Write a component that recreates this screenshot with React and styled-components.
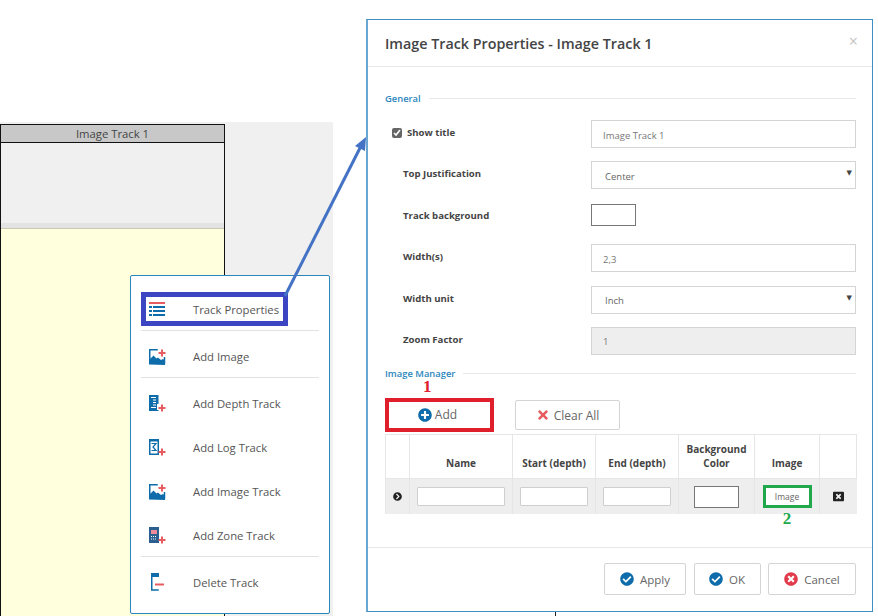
import React from 'react';
import styled, { createGlobalStyle } from 'styled-components';
import { FaCheckCircle, FaTimesCircle, FaPlusCircle, FaTimes, FaWindowClose, FaChevronCircleRight } from 'react-icons/fa';

const BLUE = '#0f6cab';
const RED = '#e65c60';

const GlobalStyle = createGlobalStyle`
  html, body { margin: 0; padding: 0; background: #fff; }
  body { font-family: "Open Sans", "Noto Sans", sans-serif; overflow: hidden; }
  * { box-sizing: border-box; }
`;

const Plus = () => <path d="M9.500 5h7M13 1.500v7" stroke={RED} strokeWidth="2" fill="none" />;
const PlusLow = () => <path d="M9.500 13h7M13 9.500v7" stroke={RED} strokeWidth="2" fill="none" />;

const ListIcon = () => (
  <svg width="16" height="15" viewBox="0 0 16 15">
    <path d="M0 1h16" stroke={RED} strokeWidth="2" />
    <path d="M0 5h3M4 5h12M0 9h3M4 9h12M0 13h3M4 13h12" stroke={BLUE} strokeWidth="2" />
  </svg>
);

const ImageIcon = () => (
  <svg width="17" height="17" viewBox="0 0 17 17">
    <path d="M.75 16V1.750h8M15.500 9v7" stroke={BLUE} strokeWidth="1.500" fill="none" />
    <path d="M0 16.500V12l4.500-4.500 3 3 1.500-1 3 2.500 2-1 2 1.500v4.500z" fill={BLUE} />
    <Plus />
  </svg>
);

const DepthIcon = () => (
  <svg width="17" height="17" viewBox="0 0 17 17">
    <path d="M0 0h9.500v9H8v6h1.500v1H0z" fill={BLUE} />
    <path d="M2 2.500h5M4 5h3M4 7.500h3M4 10h3M2 12.500h5" stroke="#fff" />
    <PlusLow />
  </svg>
);

const LogIcon = () => (
  <svg width="17" height="17" viewBox="0 0 17 17">
    <rect x=".75" y=".75" width="8.500" height="14.500" fill="#fff" stroke={BLUE} strokeWidth="1.500" />
    <path d="M0 0h10v2.500H0z" fill={BLUE} />
    <path d="M2.500 4.500h4.500L4 8l3 3.500H2.500" stroke={BLUE} strokeWidth="1.200" fill="none" />
    <PlusLow />
  </svg>
);

const ZoneIcon = () => (
  <svg width="17" height="17" viewBox="0 0 17 17">
    <path d="M0 0h10v16H0z" fill="#2a5f8f" />
    <path d="M2 3h6v4H2z" fill="#ef8a9a" />
    <path d="M2 9.500h6M2 12h6" stroke="#fff" strokeDasharray="1 1" />
    <PlusLow />
  </svg>
);

const DeleteIcon = () => (
  <svg width="14" height="18" viewBox="0 0 14 18">
    <path d="M.75 4v13h7" stroke={BLUE} strokeWidth="1.500" fill="none" />
    <path d="M0 0h8v4H0z" fill={BLUE} />
    <path d="M4 11.500h9" stroke={RED} strokeWidth="2" />
  </svg>
);

const menuItems = [
  { label: 'Track Properties', icon: <ListIcon />, highlight: true, divider: true },
  { label: 'Add Image', icon: <ImageIcon />, divider: true },
  { label: 'Add Depth Track', icon: <DepthIcon /> },
  { label: 'Add Log Track', icon: <LogIcon /> },
  { label: 'Add Image Track', icon: <ImageIcon /> },
  { label: 'Add Zone Track', icon: <ZoneIcon />, divider: true },
  { label: 'Delete Track', icon: <DeleteIcon />, inset: true },
];

export default function App() {
  return (
    <Canvas>
      <GlobalStyle />
      <TrackArea>
        <Track>
          <TrackTitle>Image Track 1</TrackTitle>
          <TrackHeaderBody />
          <TrackBand />
          <TrackFill />
        </Track>
      </TrackArea>

      <Menu>
        {menuItems.map((item) => (
          <React.Fragment key={item.label}>
            <MenuItem>
              <MenuIcon $inset={item.inset}>{item.icon}</MenuIcon>
              <span>{item.label}</span>
              {item.highlight && <MenuHighlight />}
            </MenuItem>
            {item.divider && <MenuDivider />}
          </React.Fragment>
        ))}
      </Menu>

      <Arrow width="90" height="170" viewBox="0 0 90 170">
        <path d="M2 164 L78 14" stroke="#4472c4" strokeWidth="3" fill="none" />
        <path d="M83 5 L82 19 L72 14 Z" fill="#4472c4" />
      </Arrow>

      <Dialog>
        <DialogHeader>
          <DialogTitle>Image Track Properties - Image Track 1</DialogTitle>
          <CloseMark>×</CloseMark>
        </DialogHeader>
        <DialogBody>
          <Legend>General</Legend>
          <FormGrid>
            <CheckLabel>
              <CheckBox type="checkbox" defaultChecked />
              Show title
            </CheckLabel>
            <TextInput defaultValue="Image Track 1" />

            <FieldLabel>Top Justification</FieldLabel>
            <SelectWrap>
              <SelectInput defaultValue="Center">
                <option>Center</option>
              </SelectInput>
            </SelectWrap>

            <FieldLabel>Track background</FieldLabel>
            <ColorBox />

            <FieldLabel>Width(s)</FieldLabel>
            <TextInput defaultValue="2,3" />

            <FieldLabel>Width unit</FieldLabel>
            <SelectWrap>
              <SelectInput defaultValue="Inch">
                <option>Inch</option>
              </SelectInput>
            </SelectWrap>

            <FieldLabel>Zoom Factor</FieldLabel>
            <TextInput defaultValue="1" disabled />
          </FormGrid>

          <ManagerLegend>Image Manager</ManagerLegend>
          <ToolRow>
            <AddButton>
              <Note $color="#e0202c">1</Note>
              <FaPlusCircle size={14} color={BLUE} />
              <span>Add</span>
            </AddButton>
            <ClearButton>
              <FaTimes size={14} color={RED} />
              <span>Clear All</span>
            </ClearButton>
          </ToolRow>

          <ImageTable>
            <colgroup>
              <col width="24" />
              <col width="103" />
              <col width="83" />
              <col width="83" />
              <col width="76" />
              <col width="65" />
              <col width="37" />
            </colgroup>
            <thead>
              <tr>
                <Th />
                <Th>Name</Th>
                <Th>Start (depth)</Th>
                <Th>End (depth)</Th>
                <Th>Background Color</Th>
                <Th>Image</Th>
                <Th />
              </tr>
            </thead>
            <tbody>
              <tr>
                <Td><FaChevronCircleRight size={9} color="#222" /></Td>
                <Td><CellInput /></Td>
                <Td><CellInput /></Td>
                <Td><CellInput /></Td>
                <Td><CellColor /></Td>
                <Td>
                  <ImageButton>
                    Image
                    <Note $color="#22a84c" $below>2</Note>
                  </ImageButton>
                </Td>
                <Td><FaWindowClose size={11} color="#222" /></Td>
              </tr>
            </tbody>
          </ImageTable>
        </DialogBody>
        <DialogFooter>
          <FooterButton $width={82}>
            <FaCheckCircle size={14} color={BLUE} />
            <span>Apply</span>
          </FooterButton>
          <FooterButton $width={67}>
            <FaCheckCircle size={14} color={BLUE} />
            <span>OK</span>
          </FooterButton>
          <FooterButton $width={88}>
            <FaTimesCircle size={14} color="#e23b4b" />
            <span>Cancel</span>
          </FooterButton>
        </DialogFooter>
      </Dialog>
      <EdgeTick />
    </Canvas>
  );
}

const Canvas = styled.div`
  position: relative;
  width: 878px;
  height: 616px;
  overflow: hidden;
  background: #fff;
`;

const TrackArea = styled.div`
  position: absolute;
  left: 0;
  top: 122px;
  width: 333px;
  bottom: 0;
  padding-top: 2px;
  background: #f0f0f0;
`;

const Track = styled.div`
  display: flex;
  flex-direction: column;
  width: 225px;
  height: 100%;
  border: 1px solid #111;
  border-bottom: 0;
`;

const TrackTitle = styled.div`
  height: 18px;
  flex: none;
  border-bottom: 1px solid #111;
  background: #c8c8c8;
  color: #444;
  font-size: 11.300px;
  line-height: 18px;
  text-align: center;
`;

const TrackHeaderBody = styled.div`
  height: 80px;
  flex: none;
  background: #f0f0f0;
`;

const TrackBand = styled.div`
  height: 6px;
  flex: none;
  background: #e3e3e3;
  border-bottom: 1px solid #c9c8b4;
`;

const TrackFill = styled.div`
  flex: 1;
  background: #ffffde;
`;

const Menu = styled.div`
  position: absolute;
  left: 130px;
  top: 275px;
  width: 200px;
  height: 339px;
  padding-top: 11px;
  background: #fff;
  border: 1px solid #2a86bb;
  border-radius: 2px;
`;

const MenuItem = styled.div`
  position: relative;
  display: flex;
  align-items: center;
  height: 44px;
  color: #555;
  font-size: 11.300px;
`;

const MenuIcon = styled.div`
  display: flex;
  width: 62px;
  padding-left: ${(p) => (p.$inset ? '20px' : '18px')};
`;

const MenuHighlight = styled.div`
  position: absolute;
  left: 10px;
  top: 5px;
  width: 147px;
  height: 34px;
  border: 5px solid #3c46c2;
`;

const MenuDivider = styled.div`
  height: 1px;
  margin: -1px 10px 3px;
  background: #e2e2e2;
`;

const Arrow = styled.svg`
  position: absolute;
  left: 283px;
  top: 132px;
`;

const Dialog = styled.div`
  position: absolute;
  left: 366px;
  top: 19px;
  width: 507px;
  height: 593px;
  display: flex;
  flex-direction: column;
  background: #fff;
  border: 1px solid #3d8fc4;
  border-left: 2px solid #6aa6d2;
`;

const EdgeTick = styled.div`
  position: absolute;
  left: 555px;
  top: 612px;
  width: 1px;
  height: 4px;
  background: #222;
`;

const DialogHeader = styled.div`
  display: flex;
  align-items: center;
  justify-content: space-between;
  height: 47px;
  padding: 0 14px 0 17px;
  flex: none;
  border-bottom: 1px solid #e8e8e8;
`;

const DialogTitle = styled.div`
  color: #444;
  font-size: 14.300px;
  font-weight: 600;
`;

const CloseMark = styled.div`
  margin-top: -5px;
  color: #c4c4c4;
  font-size: 16px;
`;

const DialogBody = styled.div`
  flex: 1;
  padding: 24px 16px 0 17px;
`;

const Legend = styled.div`
  display: flex;
  align-items: center;
  gap: 8px;
  height: 14px;
  color: #2b86bd;
  font-size: 9.400px;
  font-weight: 600;

  &::after {
    content: '';
    flex: 1;
    height: 1px;
    background: #e8e8e8;
  }
`;

const ManagerLegend = styled(Legend)`
  margin-top: 12px;
`;

const FormGrid = styled.div`
  display: grid;
  grid-template-columns: 206px 265px;
  grid-auto-rows: 28px;
  row-gap: 13.400px;
  margin-top: 15px;
`;

const FieldLabel = styled.div`
  padding-left: 18px;
  color: #444;
  font-size: 9.600px;
  font-weight: 700;
  line-height: 25px;
`;

const CheckLabel = styled.label`
  display: flex;
  align-items: center;
  gap: 5px;
  height: 25px;
  padding-left: 7px;
  color: #444;
  font-size: 9.600px;
  font-weight: 700;
`;

const CheckBox = styled.input`
  width: 10px;
  height: 10px;
  margin: 0;
  accent-color: #666;
`;

const TextInput = styled.input`
  width: 100%;
  height: 28px;
  padding: 2px 11px 0;
  border: 1px solid #d4d4d4;
  background: ${(p) => (p.disabled ? '#eeeeee' : '#fff')};
  color: #777;
  font-family: inherit;
  font-size: 9.500px;
  outline: none;
`;

const SelectWrap = styled.div`
  position: relative;

  &::after {
    content: '▼';
    position: absolute;
    right: 4px;
    top: 8px;
    color: #444;
    font-size: 7px;
    font-family: "DejaVu Sans", sans-serif;
  }
`;

const SelectInput = styled.select`
  width: 100%;
  height: 28px;
  padding: 2px 13px 0;
  appearance: none;
  border: 1px solid #d4d4d4;
  border-radius: 0;
  background: #fff;
  color: #666;
  font-family: inherit;
  font-size: 9.500px;
  outline: none;
`;

const ColorBox = styled.div`
  width: 45px;
  height: 22px;
  margin-top: 1px;
  border: 1px solid #777;
  background: #fff;
`;

const ToolRow = styled.div`
  display: flex;
  align-items: center;
  gap: 21px;
  height: 34px;
  margin-top: 17px;
`;

const Note = styled.div`
  position: absolute;
  left: ${(p) => (p.$below ? '50%' : '34px')};
  top: ${(p) => (p.$below ? '24px' : '-22px')};
  transform: ${(p) => (p.$below ? 'translateX(-50%)' : 'none')};
  color: ${(p) => p.$color};
  font-family: "Liberation Serif", serif;
  font-size: 17px;
  font-weight: 700;
  line-height: 14px;
`;

const AddButton = styled.div`
  position: relative;
  display: flex;
  align-items: center;
  justify-content: center;
  gap: 3px;
  width: 109px;
  height: 34px;
  padding-right: 4px;
  border: 4px solid #e01f2d;
  color: #666;
  font-size: 12px;
`;

const ClearButton = styled.div`
  display: flex;
  align-items: center;
  justify-content: center;
  gap: 4px;
  width: 105px;
  height: 30px;
  margin-top: 1px;
  border: 1px solid #d4d4d4;
  border-radius: 2px;
  color: #666;
  font-size: 12px;
`;

const ImageTable = styled.table`
  width: 471px;
  margin-top: 2px;
  table-layout: fixed;
  border-collapse: collapse;
`;

const Th = styled.th`
  height: 44px;
  padding: 0 4px 8px;
  border: 1px solid #e6e6e6;
  color: #444;
  font-size: 10px;
  font-weight: 700;
  line-height: 14px;
  vertical-align: bottom;
  text-align: center;
`;

const Td = styled.td`
  height: 36px;
  padding: 0;
  border-left: 1px solid #e6e6e6;
  background: #eeeeee;
  text-align: center;
  vertical-align: middle;

  svg {
    display: block;
    margin: 0 auto;
  }
`;

const CellInput = styled.input`
  display: block;
  width: calc(100% - 14px);
  height: 19px;
  margin: 0 auto;
  border: 1px solid #cfcfcf;
  border-radius: 1px;
  background: #fff;
  outline: none;
`;

const CellColor = styled.div`
  width: 45px;
  height: 22px;
  margin: 0 auto;
  border: 1px solid #777;
  background: #fff;
`;

const ImageButton = styled.div`
  position: relative;
  width: 49px;
  height: 23px;
  margin: 0 auto;
  border: 3px solid #22a84c;
  background: #fff;
  color: #666;
  font-size: 8.500px;
  line-height: 17px;
`;

const DialogFooter = styled.div`
  display: flex;
  justify-content: flex-end;
  gap: 7.500px;
  height: 64px;
  flex: none;
  padding: 15px 16px 0 0;
  border-top: 1px solid #e8e8e8;
`;

const FooterButton = styled.div`
  display: flex;
  align-items: center;
  justify-content: center;
  gap: 6px;
  width: ${(p) => p.$width}px;
  height: 32px;
  border: 1px solid #d4d4d4;
  border-radius: 2px;
  color: #666;
  font-size: 11.500px;
`;
